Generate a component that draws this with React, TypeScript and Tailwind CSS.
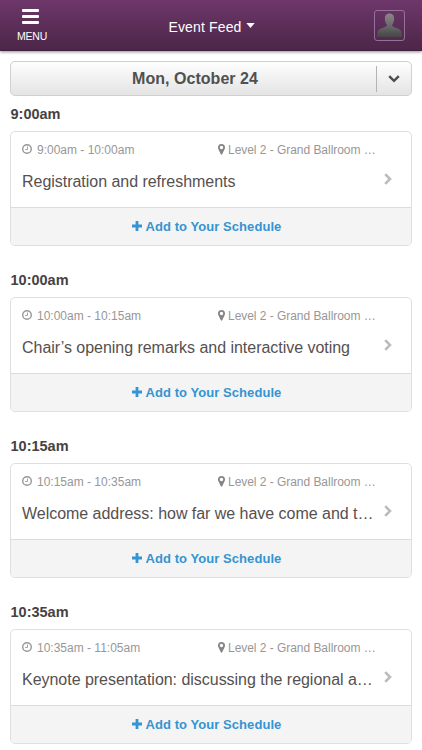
interface Session {
  start: string;
  time: string;
  location: string;
  title: string;
}

const sessions: Session[] = [
  {
    start: "9:00am",
    time: "9:00am - 10:00am",
    location: "Level 2 - Grand Ballroom …",
    title: "Registration and refreshments",
  },
  {
    start: "10:00am",
    time: "10:00am - 10:15am",
    location: "Level 2 - Grand Ballroom …",
    title: "Chair’s opening remarks and interactive voting",
  },
  {
    start: "10:15am",
    time: "10:15am - 10:35am",
    location: "Level 2 - Grand Ballroom …",
    title: "Welcome address: how far we have come and t…",
  },
  {
    start: "10:35am",
    time: "10:35am - 11:05am",
    location: "Level 2 - Grand Ballroom …",
    title: "Keynote presentation: discussing the regional a…",
  },
];

const ClockIcon = () => (
  <svg className="mt-px h-[11px] w-[11px] shrink-0" viewBox="0 0 11 11" fill="none" stroke="currentColor">
    <circle cx="5" cy="5" r="4.3" strokeWidth="1.4" />
    <path d="M5.5 2.5V5.5H3.2" strokeWidth="0.9" />
  </svg>
);

const PinIcon = () => (
  <svg className="mt-[2px] h-[11px] w-[7px] shrink-0 text-[#858585]" viewBox="0 0 7 11">
    <path
      d="M3.5 0A3.5 3.5 0 0 1 7 3.5C7 4.1 6.9 4.6 6.7 5L4.2 10.3C3.9 10.9 3.1 10.9 2.8 10.3L0.3 5C0.1 4.6 0 4.1 0 3.5A3.5 3.5 0 0 1 3.5 0ZM3.5 1.8A1.7 1.7 0 1 0 3.5 5.2A1.7 1.7 0 0 0 3.5 1.8Z"
      fill="currentColor"
      fillRule="evenodd"
    />
  </svg>
);

const PlusIcon = () => (
  <svg className="mb-[2px] h-[10px] w-[10px]" viewBox="0 0 10 10" stroke="currentColor" strokeWidth="2.8">
    <path d="M5 0V10M0 5H10" />
  </svg>
);

const AvatarIcon = () => (
  <svg className="h-[24px] w-[25px]" viewBox="0 0 25 24">
    <defs>
      <linearGradient id="avatar" x1="0" y1="0" x2="0" y2="1">
        <stop offset="0" stopColor="#8a868b" />
        <stop offset="0.5" stopColor="#6c6a6d" />
        <stop offset="1" stopColor="#464646" />
      </linearGradient>
    </defs>
    <path
      d="M12.5 0.5C15.8 0.5 17.3 2.8 17.1 6C17 8.6 16.2 10.4 15.2 11.8V12.8C15.8 14 18.7 14.6 21.6 15.8C24.2 17 24.9 19.4 25 24H0C0.1 19.4 0.8 17 3.4 15.8C6.3 14.6 9.2 14 9.8 12.8V11.8C8.8 10.4 8 8.6 7.9 6C7.7 2.8 9.2 0.5 12.5 0.5Z"
      fill="url(#avatar)"
    />
  </svg>
);

const Header = () => (
  <header className="flex h-[51px] shrink-0 justify-between border-b border-[#42203f] bg-linear-to-b from-[#6e376b] to-[#4c2648] px-[17px] text-white shadow-[0_1px_3px_rgba(0,0,0,0.45)]">
    <button className="flex w-[80px] flex-col items-start pt-[9px]">
      <span className="ml-[5px] flex w-[17px] flex-col gap-[3px]">
        <span className="h-[3px] rounded-[1px] bg-white" />
        <span className="h-[3px] rounded-[1px] bg-white" />
        <span className="h-[3px] rounded-[1px] bg-white" />
      </span>
      <span className="mt-[6px] text-[10.5px] leading-[13px] tracking-[-0.2px] whitespace-nowrap">MENU</span>
    </button>
    <button className="flex items-center gap-[4px] pt-[4px] pl-px text-[14px] tracking-[0.14px] whitespace-nowrap">
      Event Feed
      <svg className="mb-[3px] h-[5px] w-[9px]" viewBox="0 0 9 5">
        <path d="M0.3 0H8.7L4.5 5Z" fill="currentColor" />
      </svg>
    </button>
    <div className="flex w-[80px] justify-end pt-[10px]">
      <div className="flex h-[31px] w-[31px] items-end justify-center rounded-[3px] border border-[#94709a] pb-[3px]">
        <AvatarIcon />
      </div>
    </div>
  </header>
);

const DatePicker = () => (
  <button className="flex h-[35px] shrink-0 items-center rounded-[5px] border border-[#d0d0d0] bg-linear-to-b from-[#fefefe] to-[#e4e4e4]">
    <span className="flex-1 pl-[3px] text-center text-[16px] font-bold tracking-[0.04px] whitespace-nowrap text-[#505050]">
      Mon, October 24
    </span>
    <span className="flex h-[26px] w-[35px] items-center justify-center border-l border-[#b4b4b4]">
      <svg className="h-[8px] w-[12px]" viewBox="0 0 12 8" fill="none" stroke="#4c4c4c" strokeWidth="2.4">
        <path d="M1.2 1.2L6 5.9L10.8 1.2" />
      </svg>
    </span>
  </button>
);

const SessionCard = ({ session }: { session: Session }) => (
  <section className="h-[166px] shrink-0">
    <h2 className="h-[35px] pt-[9px] pl-[0.5px] text-[14.5px] leading-[18px] font-bold text-[#464242]">
      {session.start}
    </h2>
    <div className="h-[115px] overflow-hidden rounded-[5px] border border-[#dfdfdf]">
      <div className="h-[76px] border-b border-[#dcdcdc] px-[11px] pt-[10px]">
        <div className="flex text-[12px] leading-[16px] whitespace-nowrap text-[#979797]">
          <div className="flex w-[196px] items-start gap-[4px]">
            <span className="pt-px">
              <ClockIcon />
            </span>
            <span>{session.time}</span>
          </div>
          <div className="flex items-start gap-[3px]">
            <PinIcon />
            <span className="tracking-[-0.04px]">{session.location}</span>
          </div>
        </div>
        <div className="mt-[14px] flex items-center justify-between pr-[8px]">
          <span className="text-[16px] leading-[20px] tracking-[-0.03px] whitespace-nowrap text-[#565050]">
            {session.title}
          </span>
          <svg className="mb-[6px] h-[12px] w-[8px]" viewBox="0 0 8 12" fill="none" stroke="#bcbcbc" strokeWidth="2.6">
            <path d="M1.2 1.2L6 6L1.2 10.8" />
          </svg>
        </div>
      </div>
      <button className="flex h-[37px] w-full items-center justify-center gap-[4px] bg-[#f4f4f4] pr-[9px] text-[13px] font-bold tracking-[0.06px] whitespace-nowrap text-[#3594d2]">
        <PlusIcon />
        <span>Add to Your Schedule</span>
      </button>
    </div>
  </section>
);

export default function App() {
  return (
    <div className="flex h-[750px] w-[422px] flex-col overflow-hidden bg-white font-['Liberation_Sans',Arial,sans-serif]">
      <Header />
      <main className="flex flex-col px-[10px] pt-[10px]">
        <DatePicker />
        {sessions.map((session) => (
          <SessionCard key={session.start} session={session} />
        ))}
      </main>
    </div>
  );
}
